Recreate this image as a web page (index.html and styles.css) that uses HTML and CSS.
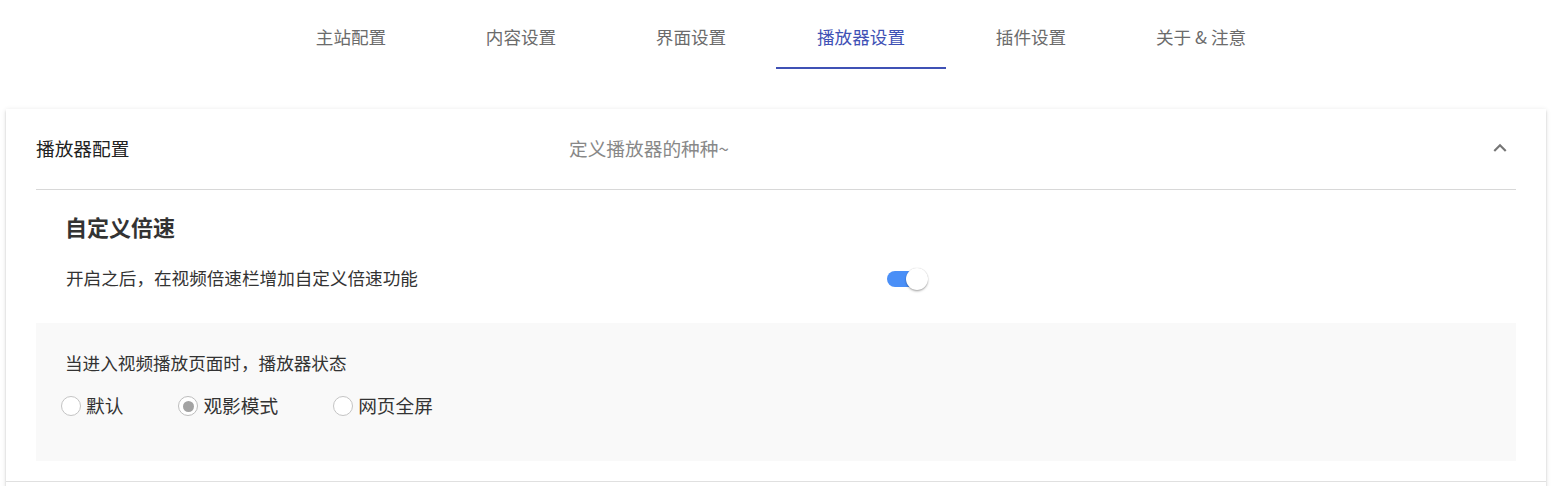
FILE: index.html
```html
<!DOCTYPE html>
<html lang="zh-CN">
<head>
<meta charset="utf-8">
<title>播放器设置</title>
<link rel="stylesheet" href="styles.css">
</head>
<body>
<div class="page">
  <nav class="tabs">
    <div class="tab">主站配置</div>
    <div class="tab">内容设置</div>
    <div class="tab">界面设置</div>
    <div class="tab active">播放器设置</div>
    <div class="tab">插件设置</div>
    <div class="tab">关于 &amp; 注意</div>
  </nav>

  <div class="panels">
    <section class="panel">
      <header class="panel-header">
        <div class="panel-title">播放器配置</div>
        <div class="panel-subtitle">定义播放器的种种~</div>
        <svg class="chevron" viewBox="0 0 24 24" width="26" height="26"><path d="M7.41 15.41L12 10.83l4.59 4.58L18 14l-6-6-6 6z"/></svg>
      </header>
      <div class="panel-divider"></div>
      <div class="panel-content">
        <div class="setting">
          <h3 class="setting-title">自定义倍速</h3>
          <div class="setting-row">
            <span class="setting-desc">开启之后，在视频倍速栏增加自定义倍速功能</span>
            <span class="switch on"><span class="switch-track"></span><span class="switch-thumb"></span></span>
          </div>
        </div>
        <div class="option-box">
          <div class="option-label">当进入视频播放页面时，播放器状态</div>
          <div class="radio-group">
            <label class="radio"><span class="radio-circle"></span><span class="radio-text">默认</span></label>
            <label class="radio checked"><span class="radio-circle"></span><span class="radio-text">观影模式</span></label>
            <label class="radio"><span class="radio-circle"></span><span class="radio-text">网页全屏</span></label>
          </div>
        </div>
      </div>
    </section>
    <section class="panel panel-next"></section>
  </div>
</div>
</body>
</html>
```

FILE: styles.css
```css
* { box-sizing: border-box; }

html, body {
  margin: 0;
  padding: 0;
  background: #fff;
  overflow: hidden;
}

body {
  font-family: "Noto Sans CJK SC", "Noto Sans", "Liberation Sans", sans-serif;
  color: #333;
}

.page {
  width: 1540px;
  margin-left: 6px;
}

/* tabs */
.tabs {
  display: flex;
  justify-content: center;
  margin-top: 8px;
  height: 61px;
}

.tab {
  width: 170px;
  display: flex;
  align-items: center;
  justify-content: center;
  font-size: 17.6px;
  line-height: 24px;
  color: #6b6b6b;
  border-bottom: 2px solid transparent;
  padding-bottom: 2px;
}

.tab.active {
  color: #3f51b5;
  border-bottom-color: #3f51b5;
}

/* panels */
.panels {
  margin-top: 40px;
  background: #fff;
  box-shadow: 0 3px 1px -2px rgba(0,0,0,.2), 0 2px 2px 0 rgba(0,0,0,.14), 0 1px 5px 0 rgba(0,0,0,.12);
}

.panel-header {
  height: 80px;
  display: flex;
  align-items: center;
  padding: 0 33px 3px 30px;
}

.panel-title {
  width: 533px;
  font-size: 18.7px;
  color: #222;
  flex-shrink: 0;
}

.panel-subtitle {
  flex: 1;
  font-size: 18.7px;
  color: #888;
}

.chevron {
  fill: rgba(0,0,0,.54);
  flex-shrink: 0;
}

.panel-divider {
  height: 1px;
  margin: 0 30px;
  background: #d8d8d8;
}

.panel-content {
  padding: 0 30px 20px;
}

.setting {
  padding: 21px 30px 0 29px;
}

.setting-title {
  margin: 0;
  font-size: 22px;
  line-height: 30px;
  font-weight: 700;
  color: #333;
}

.setting-row {
  display: flex;
  align-items: center;
  margin-top: 24px;
  height: 28px;
}

.setting-desc {
  width: 822px;
  font-size: 17.6px;
  line-height: 28px;
  color: #333;
  padding-left: 1px;
  padding-bottom: 2px;
}

.switch {
  position: relative;
  width: 42px;
  height: 22px;
  display: inline-block;
}

.switch-track {
  position: absolute;
  left: 0;
  top: 3px;
  width: 40px;
  height: 16px;
  border-radius: 8px;
  background: #4a8ff7;
}

.switch-thumb {
  position: absolute;
  left: 19px;
  top: 0;
  width: 22px;
  height: 22px;
  border-radius: 50%;
  background: #fff;
  box-shadow: 0 2px 3px -1px rgba(0,0,0,.25), 0 1px 2px rgba(0,0,0,.18), 0 0 1px rgba(0,0,0,.2);
}

.option-box {
  margin-top: 30px;
  background: #f9f9f9;
  padding: 27px 29px 42px;
}

.option-label {
  font-size: 17.6px;
  line-height: 26px;
  color: #333;
}

.radio-group {
  display: flex;
  align-items: center;
  gap: 55px;
  margin-top: 17px;
  margin-left: -4px;
  height: 26px;
}

.radio {
  display: flex;
  align-items: center;
  gap: 5px;
}

.radio-circle {
  width: 20px;
  height: 20px;
  border-radius: 50%;
  border: 1.5px solid #c4c4c4;
  background: #fff;
  display: flex;
  align-items: center;
  justify-content: center;
}

.radio.checked .radio-circle {
  border-color: #bdbdbd;
}

.radio.checked .radio-circle::after {
  content: "";
  width: 11px;
  height: 11px;
  border-radius: 50%;
  background: #a3a3a3;
}

.radio-text {
  font-size: 18.7px;
  line-height: 26px;
  color: #333;
  padding-bottom: 2px;
}

.panel-next {
  height: 60px;
  border-top: 1px solid #e0e0e0;
}
```
